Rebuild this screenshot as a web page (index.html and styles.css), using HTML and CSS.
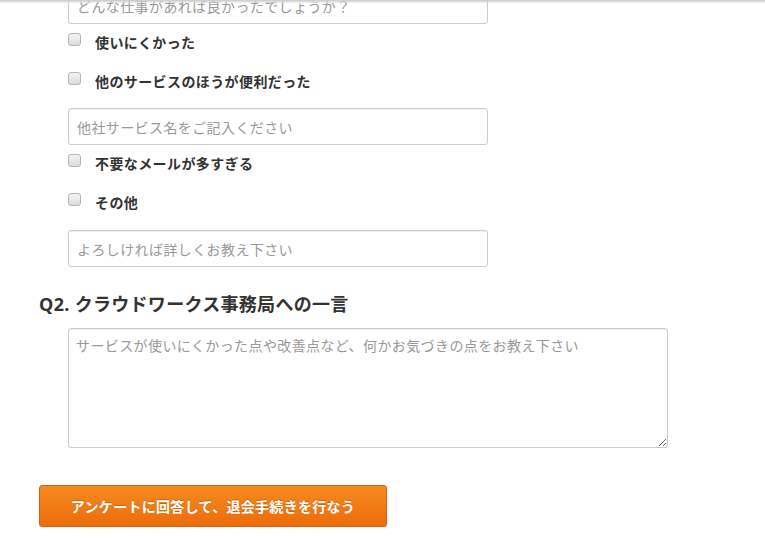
FILE: index.html
```html
<!DOCTYPE html>
<html lang="ja">
<head>
    <meta charset="UTF-8">
    <meta name="viewport" content="width=device-width, initial-scale=1.0">
    <title>退会アンケート</title>
    <link rel="stylesheet" href="styles.css">
</head>
<body>

<div class="top-shadow"></div>

<main class="survey">
    <div class="choices">
        <input type="text" class="text-field first" placeholder="どんな仕事があれば良かったでしょうか？">
        <label class="option opt-1"><input type="checkbox"><span>使いにくかった</span></label>
        <label class="option opt-2"><input type="checkbox"><span>他のサービスのほうが便利だった</span></label>
        <input type="text" class="text-field after-2" placeholder="他社サービス名をご記入ください">
        <label class="option opt-3"><input type="checkbox"><span>不要なメールが多すぎる</span></label>
        <label class="option opt-4"><input type="checkbox"><span>その他</span></label>
        <input type="text" class="text-field after-4" placeholder="よろしければ詳しくお教え下さい">
    </div>

    <h2 class="question">Q2. クラウドワークス事務局への一言</h2>
    <div class="choices">
        <textarea class="comment" placeholder="サービスが使いにくかった点や改善点など、何かお気づきの点をお教え下さい"></textarea>
    </div>

    <button type="submit" class="submit-btn">アンケートに回答して、退会手続きを行なう</button>
</main>

</body>
</html>
```

FILE: styles.css
```css
* {
    box-sizing: border-box;
}
body {
    font-family: "Open Sans", "Noto Sans CJK JP", sans-serif;
    margin: 0;
    padding: 0;
    background: #fff;
    color: #333;
    overflow: hidden;
}
.top-shadow {
    position: fixed;
    top: 0;
    left: 0;
    right: 0;
    height: 3px;
    background: linear-gradient(#c8c8c8, rgba(230, 230, 230, 0.4));
}
.survey {
    padding-left: 39px;
}
.choices {
    padding-left: 29px;
    display: flex;
    flex-direction: column;
    align-items: flex-start;
}
.text-field {
    width: 420px;
    height: 37px;
    border: 1px solid #ccc;
    border-radius: 3px;
    box-shadow: inset 0 1px 1px rgba(0, 0, 0, 0.06);
    padding: 0 8px;
    font-family: "Noto Sans CJK JP", sans-serif;
    font-size: 14px;
    letter-spacing: 0.4px;
    color: #333;
}
.text-field::placeholder,
.comment::placeholder {
    color: #999;
}
.text-field.first {
    margin-top: -13px;
}
.text-field.after-2 {
    margin-top: 17px;
}
.text-field.after-4 {
    margin-top: 18px;
}
.option {
    display: flex;
    align-items: center;
    height: 20px;
    font-family: "Noto Sans CJK JP", sans-serif;
    font-size: 14px;
    font-weight: bold;
    letter-spacing: 0.4px;
    color: #333;
}
.option input {
    width: 13px;
    height: 13px;
    margin: -5px 14px 0 0;
    appearance: none;
    border: 1px solid #b5b5b5;
    border-radius: 3px;
    background: linear-gradient(#f4f4f4, #dcdcdc);
}
.opt-1 {
    margin-top: 8px;
}
.opt-2 {
    margin-top: 19px;
}
.opt-3 {
    margin-top: 8px;
}
.opt-4 {
    margin-top: 19px;
}
.question {
    margin: 25px 0 0;
    font-size: 18px;
    line-height: 24px;
    font-weight: bold;
    letter-spacing: 0.3px;
    color: #333;
}
.comment {
    margin-top: 12px;
    width: 600px;
    height: 120px;
    border: 1px solid #ccc;
    border-radius: 3px;
    box-shadow: inset 0 1px 1px rgba(0, 0, 0, 0.06);
    padding: 6px 7px;
    font-family: "Noto Sans CJK JP", sans-serif;
    font-size: 14px;
    line-height: 20px;
    letter-spacing: 0.4px;
}
.submit-btn {
    display: block;
    margin-top: 37px;
    width: 348px;
    height: 42px;
    border: 1px solid #d8620a;
    border-radius: 3px;
    background: linear-gradient(#f68b1f, #ec6c0c);
    color: #fff;
    font-family: "Noto Sans CJK JP", sans-serif;
    font-size: 14px;
    font-weight: bold;
    letter-spacing: 0.3px;
    text-shadow: 0 -1px 0 rgba(150, 60, 0, 0.4);
    box-shadow: 0 1px 1px rgba(0, 0, 0, 0.15);
    cursor: pointer;
}
```
